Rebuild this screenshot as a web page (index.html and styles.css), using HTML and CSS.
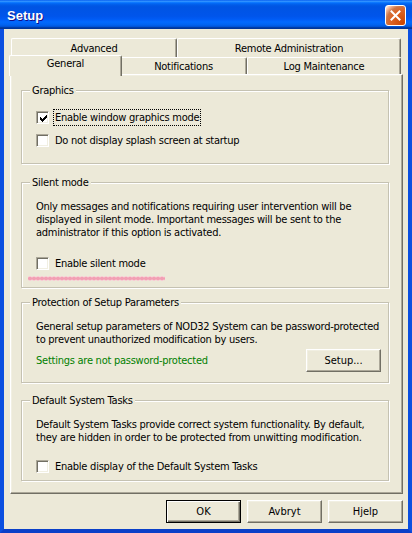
FILE: index.html
```html
<!DOCTYPE html>
<html lang="en">
<head>
<meta charset="UTF-8">
<meta name="viewport" content="width=device-width, initial-scale=1.0">
<title>Setup</title>
<link rel="stylesheet" href="styles.css">
</head>
<body>
<div class="window">
  <div class="titlebar">
    <span class="title">Setup</span>
    <button class="close" aria-label="Close">
      <svg width="11" height="11" viewBox="0 0 11 11"><path d="M1.5 1.5 L9.5 9.5 M9.5 1.5 L1.5 9.5" stroke="#fff" stroke-width="2" stroke-linecap="square"/></svg>
    </button>
  </div>

  <div class="dialog">
    <div class="tabs">
      <div class="tab-row back">
        <div class="tab tab-advanced">Advanced</div>
        <div class="tab tab-remote">Remote Administration</div>
      </div>
      <div class="tab-row front">
        <div class="tab tab-general selected">General</div>
        <div class="tab tab-notif">Notifications</div>
        <div class="tab tab-log">Log Maintenance</div>
      </div>
    </div>

    <div class="panel">
      <div class="group graphics">
        <div class="group-title">Graphics</div>
        <div class="check first">
          <span class="box checked">
            <svg width="7" height="7" viewBox="0 0 7 7" shape-rendering="crispEdges"><path d="M0 2h1v3h-1z M1 3h1v3h-1z M2 4h1v3h-1z M3 3h1v3h-1z M4 2h1v3h-1z M5 1h1v3h-1z M6 0h1v3h-1z" fill="#000"/></svg>
          </span>
          <span class="label focused">Enable window graphics mode</span>
        </div>
        <div class="check second">
          <span class="box"></span>
          <span class="label">Do not display splash screen at startup</span>
        </div>
      </div>

      <div class="group silent">
        <div class="group-title">Silent mode</div>
        <p class="text">Only messages and notifications requiring user intervention will be<br>displayed in silent mode. Important messages will be sent to the<br>administrator if this option is activated.</p>
        <div class="check">
          <span class="box"></span>
          <span class="label">Enable silent mode</span>
        </div>
        <div class="squiggle"></div>
      </div>

      <div class="group protection">
        <div class="group-title">Protection of Setup Parameters</div>
        <p class="text">General setup parameters of NOD32 System can be password-protected<br>to prevent unauthorized modification by users.</p>
        <div class="status-row">
          <span class="status">Settings are not password-protected</span>
          <button class="btn">Setup...</button>
        </div>
      </div>

      <div class="group tasks">
        <div class="group-title">Default System Tasks</div>
        <p class="text">Default System Tasks provide correct system functionality. By default,<br>they are hidden in order to be protected from unwitting modification.</p>
        <div class="check">
          <span class="box"></span>
          <span class="label">Enable display of the Default System Tasks</span>
        </div>
      </div>
    </div>

    <div class="buttons">
      <button class="btn default">OK</button>
      <button class="btn">Avbryt</button>
      <button class="btn">Hjelp</button>
    </div>
  </div>
</div>
</body>
</html>
```

FILE: styles.css
```css
body { margin: 0; font: 11px/13px "DejaVu Sans Condensed", "DejaVu Sans", sans-serif; font-stretch: condensed; letter-spacing: -0.25px; color: #000; background: #fff; }
.window { width: 412px; height: 533px; display: flex; flex-direction: column; }

/* title bar */
.titlebar { height: 29px; box-sizing: border-box; display: flex; align-items: center; justify-content: space-between; padding: 1px 6px 0 7px;
  background: linear-gradient(to bottom, #0058ee 0%, #3593ff 4%, #288eff 6%, #127dff 8%, #036ffc 10%, #0262ee 14%, #0057e5 20%, #0054e3 24%, #0055eb 56%, #005bf5 66%, #026afe 76%, #0062ef 86%, #0052d6 92%, #0040ab 94%, #003092 100%); }
.title { font: bold 13px/15px "Liberation Sans", Arial, sans-serif; letter-spacing: 0; color: #fff; text-shadow: 1px 1px #0f1089; }
.close { width: 21px; height: 21px; padding: 0; border: 1px solid #fff; border-radius: 3px; display: flex; align-items: center; justify-content: center;
  background: radial-gradient(circle at 90% 90%, #cc4600 0%, #dc6527 55%, #cd7546 70%, #ffccb2 90%, #fff 100%); }

/* dialog body */
.dialog { flex: 1; background: #ece9d8; border: 4px solid #0b4fe0; border-top: none; border-bottom-color: #0a3fc8; padding: 9px 5px 6px 6px; }

/* tabs */
.tab-row { display: flex; margin-left: 1px; }
.tab-row.back { height: 19px; }
.tab-row.front { height: 17px; align-items: flex-start; }
.tab { box-sizing: border-box; display: flex; align-items: center; justify-content: center; background: #ece9d8; border-top: 1px solid #fff; border-left: 1px solid #fff; border-right: 1px solid #716f64; box-shadow: inset -1px 0 #aca899; border-radius: 2px 2px 0 0; white-space: nowrap; }
.back .tab { height: 19px; }
.front .tab { height: 17px; }
.tab-advanced { width: 166px; }
.tab-remote { width: 224px; }
.tab-general { width: 109px; }
.tab-notif { width: 127px; }
.tab-log { width: 154px; }
.front .tab.selected { width: 113px; height: 21px; margin: -2px -2px 0 -2px; padding-bottom: 5px; position: relative; z-index: 1; }

/* panel */
.panel { width: 393px; box-sizing: border-box; border: 1px solid; border-color: #fff #716f64 #716f64 #fff; box-shadow: inset -1px -1px #aca899, inset 1px 1px #f1efe2; padding: 15px 13px 12px 10px; }

/* group boxes */
.group { box-sizing: border-box; border: 1px solid #c5c2b2; box-shadow: inset 1px 1px #fff, 1px 1px #fff; padding: 0 7px 0 14px; }
.group + .group { margin-top: 18px; }
.graphics { height: 74px; }
.silent { height: 106px; }
.protection { height: 81px; margin-top: 14px !important; }
.tasks { height: 81px; margin-top: 17px !important; }
.group-title { display: table; margin: -7px 0 0 -6px; padding: 0 2px; background: #ece9d8; }
.text { margin: 11px 0 0; white-space: nowrap; }

/* checkboxes */
.check { display: flex; align-items: center; height: 17px; }
.check.first { margin-top: 12px; }
.check.second { margin-top: 6px; }
.silent .check { margin-top: 16px; }
.tasks .check { margin-top: 14px; }
.box { box-sizing: border-box; width: 13px; height: 13px; margin-right: 4px; background: #fff; border: 1px solid; border-color: #aca899 #fff #fff #aca899; box-shadow: inset 1px 1px #716f64, inset -1px -1px #f1efe2; display: flex; align-items: center; justify-content: center; }
.box svg { display: block; margin: 1px 0 0 1px; }
.label { padding: 1px; border: 1px solid transparent; white-space: nowrap; }
.label.focused { border: 1px dotted #000; }

.squiggle { width: 137px; height: 5px; margin: 4px 0 0 -8px; background: radial-gradient(ellipse 3px 2.5px, #f29fb3 55%, #f9c8d3 80%, transparent 100%) 0 0 / 4px 5px repeat-x; }

/* protection row */
.status-row { display: flex; align-items: center; justify-content: space-between; margin-top: 3px; }
.status { color: #008000; }

/* buttons */
.btn { box-sizing: border-box; width: 75px; height: 23px; padding: 0; font: inherit; color: #000; background: #ece9d8; border: 1px solid; border-color: #fff #716f64 #716f64 #fff; box-shadow: inset -1px -1px #aca899, inset 1px 1px #f1efe2; }
.btn.default { border: 1px solid #000; box-shadow: inset 1px 1px #fff, inset -1px -1px #716f64, inset -2px -2px #aca899; }
.buttons { display: flex; justify-content: flex-end; gap: 6px; margin-top: 6px; }
```
